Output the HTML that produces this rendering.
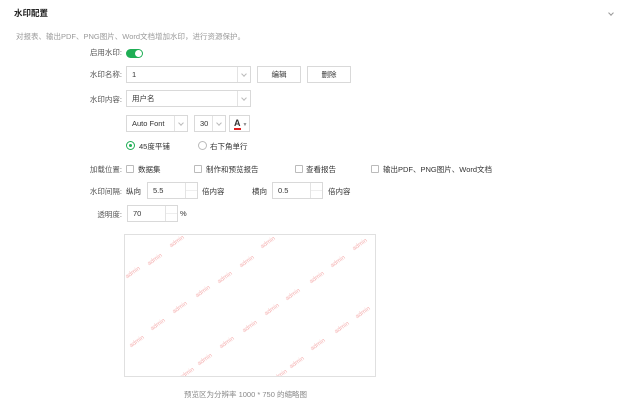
<!DOCTYPE html>
<html><head><meta charset="utf-8"><style>
*{margin:0;padding:0;box-sizing:border-box}
body{width:631px;height:416px;background:#fff;position:relative;overflow:hidden;font-family:"Liberation Sans","Noto Sans CJK SC",sans-serif;font-size:7.5px;color:#333}
.a{position:absolute;white-space:nowrap}
.lbl{position:absolute;text-align:right;color:#555;width:60px}
.box{position:absolute;border:1px solid #d9d9d9;background:#fff;height:17px;line-height:15px;padding-left:5px}
.arr{position:absolute;right:0;top:0;bottom:0;width:13px;border-left:1px solid #e3e3e3}
.arr:after{content:"";position:absolute;left:4px;top:5px;width:3px;height:3px;border-right:1px solid #bbb;border-bottom:1px solid #bbb;transform:rotate(45deg)}
.btn{position:absolute;border:1px solid #d9d9d9;height:17px;line-height:15px;text-align:center;color:#333}
.spin{position:absolute;right:0;top:0;bottom:0;width:12px;border-left:1px solid #e3e3e3}
.spin:before{content:"";position:absolute;left:0;right:0;top:7px;border-top:1px solid #eee}
.cb{position:absolute;width:8px;height:8px;border:1px solid #bbb;border-radius:1px}
.wm{position:absolute;color:#f5b0b0;font-size:6px;transform:rotate(-35deg);transform-origin:center}
</style></head><body>
<div class="a" style="left:14px;top:7px;font-size:8.5px;font-weight:bold;color:#222">水印配置</div>
<div class="a" style="left:609px;top:11px;width:4px;height:4px;border-right:1px solid #999;border-bottom:1px solid #999;transform:rotate(45deg)"></div>
<div class="a" style="left:16px;top:31px;color:#999">对报表、输出PDF、PNG图片、Word文档增加水印，进行资源保护。</div>

<div class="lbl" style="left:62px;top:47px">启用水印:</div>
<div class="a" style="left:126px;top:49px;width:17px;height:9px;border-radius:5px;background:#1fae55"><div style="position:absolute;right:1px;top:1px;width:7px;height:7px;border-radius:50%;background:#fff"></div></div>

<div class="lbl" style="left:62px;top:69px">水印名称:</div>
<div class="box" style="left:126px;top:66px;width:125px">1<div class="arr"></div></div>
<div class="btn" style="left:257px;top:66px;width:44px">编辑</div>
<div class="btn" style="left:307px;top:66px;width:44px">删除</div>

<div class="lbl" style="left:62px;top:94px">水印内容:</div>
<div class="box" style="left:126px;top:90px;width:125px">用户名<div class="arr"></div></div>

<div class="box" style="left:126px;top:115px;width:62px">Auto Font<div class="arr"></div></div>
<div class="box" style="left:194px;top:115px;width:32px">30<div class="arr"></div></div>
<div class="box" style="left:229px;top:115px;width:21px;padding-left:4px"><span style="font-weight:bold;font-size:9px;color:#333;border-bottom:2px solid #e02020;line-height:9px;display:inline-block">A</span><span style="font-size:5px;color:#888;margin-left:2px">▼</span></div>

<div class="a" style="left:126px;top:141px;width:9px;height:9px;border:1px solid #1fae55;border-radius:50%"><div style="position:absolute;left:2px;top:2px;width:3px;height:3px;border-radius:50%;background:#1fae55"></div></div>
<div class="a" style="left:139px;top:141px">45度平铺</div>
<div class="a" style="left:198px;top:141px;width:9px;height:9px;border:1px solid #bbb;border-radius:50%"></div>
<div class="a" style="left:210px;top:141px">右下角单行</div>

<div class="lbl" style="left:62px;top:164px">加载位置:</div>
<div class="cb" style="left:126px;top:165px"></div><div class="a" style="left:138px;top:164px">数据集</div>
<div class="cb" style="left:194px;top:165px"></div><div class="a" style="left:206px;top:164px">制作和预览报告</div>
<div class="cb" style="left:295px;top:165px"></div><div class="a" style="left:306px;top:164px">查看报告</div>
<div class="cb" style="left:371px;top:165px"></div><div class="a" style="left:383px;top:164px">输出PDF、PNG图片、Word文档</div>

<div class="lbl" style="left:62px;top:186px">水印间隔:</div>
<div class="a" style="left:126px;top:186px">纵向</div>
<div class="box" style="left:147px;top:182px;width:51px">5.5<div class="spin"></div></div>
<div class="a" style="left:202px;top:186px">倍内容</div>
<div class="a" style="left:252px;top:186px">横向</div>
<div class="box" style="left:272px;top:182px;width:51px">0.5<div class="spin"></div></div>
<div class="a" style="left:328px;top:186px">倍内容</div>

<div class="lbl" style="left:62px;top:209px">透明度:</div>
<div class="box" style="left:127px;top:205px;width:51px">70<div class="spin"></div></div>
<div class="a" style="left:180px;top:209px">%</div>

<div class="a" style="left:124px;top:234px;width:252px;height:143px;border:1px solid #e0e0e0;overflow:hidden">
<div class="wm" style="left:0px;top:35px">admin</div>
<div class="wm" style="left:22px;top:22px">admin</div>
<div class="wm" style="left:44px;top:4px">admin</div>
<div class="wm" style="left:92px;top:40px">admin</div>
<div class="wm" style="left:114px;top:24px">admin</div>
<div class="wm" style="left:135px;top:5px">admin</div>
<div class="wm" style="left:70px;top:54px">admin</div>
<div class="wm" style="left:160px;top:57px">admin</div>
<div class="wm" style="left:184px;top:40px">admin</div>
<div class="wm" style="left:205px;top:24px">admin</div>
<div class="wm" style="left:227px;top:7px">admin</div>
<div class="wm" style="left:4px;top:104px">admin</div>
<div class="wm" style="left:25px;top:87px">admin</div>
<div class="wm" style="left:47px;top:70px">admin</div>
<div class="wm" style="left:94px;top:105px">admin</div>
<div class="wm" style="left:117px;top:89px">admin</div>
<div class="wm" style="left:139px;top:72px">admin</div>
<div class="wm" style="left:72px;top:122px">admin</div>
<div class="wm" style="left:164px;top:125px">admin</div>
<div class="wm" style="left:185px;top:107px">admin</div>
<div class="wm" style="left:209px;top:90px">admin</div>
<div class="wm" style="left:230px;top:75px">admin</div>
<div class="wm" style="left:54px;top:136px">admin</div>
<div class="wm" style="left:147px;top:138px">admin</div>
</div>

<div class="a" style="left:184px;top:389px;color:#888">预览区为分辨率 1000 * 750 的缩略图</div>
</body></html>
